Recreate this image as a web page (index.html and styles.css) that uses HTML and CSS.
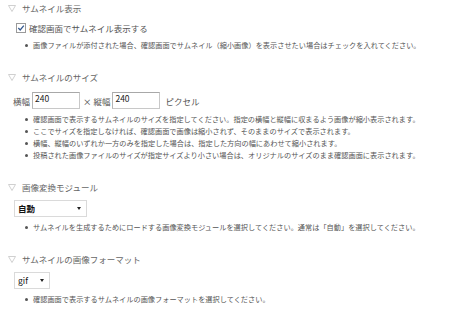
FILE: index.html
```html
<!DOCTYPE html>
<html lang="ja">
<head>
<meta charset="utf-8">
<title>サムネイル設定</title>
<link rel="stylesheet" href="styles.css">
</head>
<body>
<div class="page">
  <section class="section">
    <h3 class="heading"><svg class="tri" width="8" height="7" viewBox="0 0 8 7"><path d="M0.5 0.5 H7.5 L4 6.5 Z" fill="none" stroke="#c4c4c4" stroke-width="0.8"/></svg>サムネイル表示</h3>
    <label class="check-row">
      <span class="checkbox"><svg width="10" height="10" viewBox="0 0 10 10"><rect x="0.5" y="0.5" width="9" height="9" fill="#fff" stroke="#9a9a9a"/><path d="M2.3 5 L4.2 7 L7.8 2.6" fill="none" stroke="#35598f" stroke-width="1.3"/></svg></span>
      <span class="check-label">確認画面でサムネイル表示する</span>
    </label>
    <ul class="notes">
      <li>画像ファイルが添付された場合、確認画面でサムネイル（縮小画像）を表示させたい場合はチェックを入れてください。</li>
    </ul>
  </section>

  <section class="section">
    <h3 class="heading"><svg class="tri" width="8" height="7" viewBox="0 0 8 7"><path d="M0.5 0.5 H7.5 L4 6.5 Z" fill="none" stroke="#c4c4c4" stroke-width="0.8"/></svg>サムネイルのサイズ</h3>
    <div class="size-row">
      <span class="size-label">横幅</span>
      <span class="num">240</span>
      <span class="size-label times">× 縦幅</span>
      <span class="num">240</span>
      <span class="size-label unit">ピクセル</span>
    </div>
    <ul class="notes">
      <li>確認画面で表示するサムネイルのサイズを指定してください。指定の横幅と縦幅に収まるよう画像が縮小表示されます。</li>
      <li>ここでサイズを指定しなければ、確認画面で画像は縮小されず、そのままのサイズで表示されます。</li>
      <li>横幅、縦幅のいずれか一方のみを指定した場合は、指定した方向の幅にあわせて縮小されます。</li>
      <li>投稿された画像ファイルのサイズが指定サイズより小さい場合は、オリジナルのサイズのまま確認画面に表示されます。</li>
    </ul>
  </section>

  <section class="section">
    <h3 class="heading"><svg class="tri" width="8" height="7" viewBox="0 0 8 7"><path d="M0.5 0.5 H7.5 L4 6.5 Z" fill="none" stroke="#c4c4c4" stroke-width="0.8"/></svg>画像変換モジュール</h3>
    <div class="control-row">
      <div class="select wide"><span class="sel-text bold">自動</span><span class="arrow"></span></div>
    </div>
    <ul class="notes">
      <li>サムネイルを生成するためにロードする画像変換モジュールを選択してください。通常は「自動」を選択してください。</li>
    </ul>
  </section>

  <section class="section">
    <h3 class="heading"><svg class="tri" width="8" height="7" viewBox="0 0 8 7"><path d="M0.5 0.5 H7.5 L4 6.5 Z" fill="none" stroke="#c4c4c4" stroke-width="0.8"/></svg>サムネイルの画像フォーマット</h3>
    <div class="control-row">
      <div class="select narrow"><span class="sel-text">gif</span><span class="arrow"></span></div>
    </div>
    <ul class="notes">
      <li>確認画面で表示するサムネイルの画像フォーマットを選択してください。</li>
    </ul>
  </section>
</div>
</body>
</html>
```

FILE: styles.css
```css
html, body {
  margin: 0;
  padding: 0;
  background: #fff;
}
body {
  font-family: "Noto Sans CJK JP", "Noto Sans", sans-serif;
  color: #555;
}
.page {
  display: flex;
  flex-direction: column;
}
.section {
  display: flex;
  flex-direction: column;
  margin-bottom: 18px;
}
.heading {
  margin: 0;
  height: 16px;
  line-height: 16px;
  font-size: 8.5px;
  font-weight: normal;
  color: #666;
  display: flex;
  align-items: center;
  padding-left: 8px;
}
.tri {
  display: block;
  width: 8px;
  height: 7px;
  margin-right: 6px;
}
.check-row {
  display: flex;
  align-items: center;
  height: 14px;
  margin-top: 5px;
  padding-left: 16px;
}
.checkbox {
  display: block;
  width: 10px;
  height: 10px;
  margin-right: 3px;
}
.checkbox svg {
  display: block;
}
.check-label {
  font-size: 8.5px;
  color: #555;
}
.notes {
  list-style: none;
  margin: 4px 0 0 0;
  padding: 0 0 0 33px;
}
.notes li {
  position: relative;
  font-size: 7.2px;
  line-height: 12px;
  height: 12px;
  white-space: nowrap;
  color: #555;
}
.notes li::before {
  content: "";
  position: absolute;
  left: -8px;
  top: 5px;
  width: 3px;
  height: 3px;
  border-radius: 50%;
  background: #555;
}
.size-row {
  display: flex;
  align-items: center;
  margin-top: 7px;
  padding-left: 13px;
  height: 17px;
}
.size-label {
  font-size: 8.5px;
  color: #555;
  margin-right: 2px;
}
.size-label.times {
  margin-left: 3px;
}
.size-label.unit {
  margin-left: 5px;
}
.num {
  box-sizing: border-box;
  display: block;
  width: 48px;
  height: 17px;
  border: 1px solid #c8c8c8;
  border-top-color: #a8a8a8;
  border-left-color: #b4b4b4;
  padding: 0 2px;
  font-size: 8.5px;
  line-height: 11px;
  color: #222;
  background: #fff;
}
.control-row {
  display: flex;
  margin-top: 5px;
  padding-left: 14px;
  height: 17px;
}
.select {
  box-sizing: border-box;
  display: flex;
  align-items: center;
  justify-content: space-between;
  height: 17px;
  border: 1px solid #dadada;
  background: #fff;
  padding: 0 5px 0 3px;
}
.select.wide { width: 73px; }
.select.narrow { width: 36px; }
.sel-text {
  font-size: 8.5px;
  line-height: 15px;
  color: #111;
}
.sel-text.bold {
  font-weight: bold;
}
.arrow {
  display: block;
  width: 0;
  height: 0;
  border-left: 2.5px solid transparent;
  border-right: 2.5px solid transparent;
  border-top: 3px solid #222;
}
```
